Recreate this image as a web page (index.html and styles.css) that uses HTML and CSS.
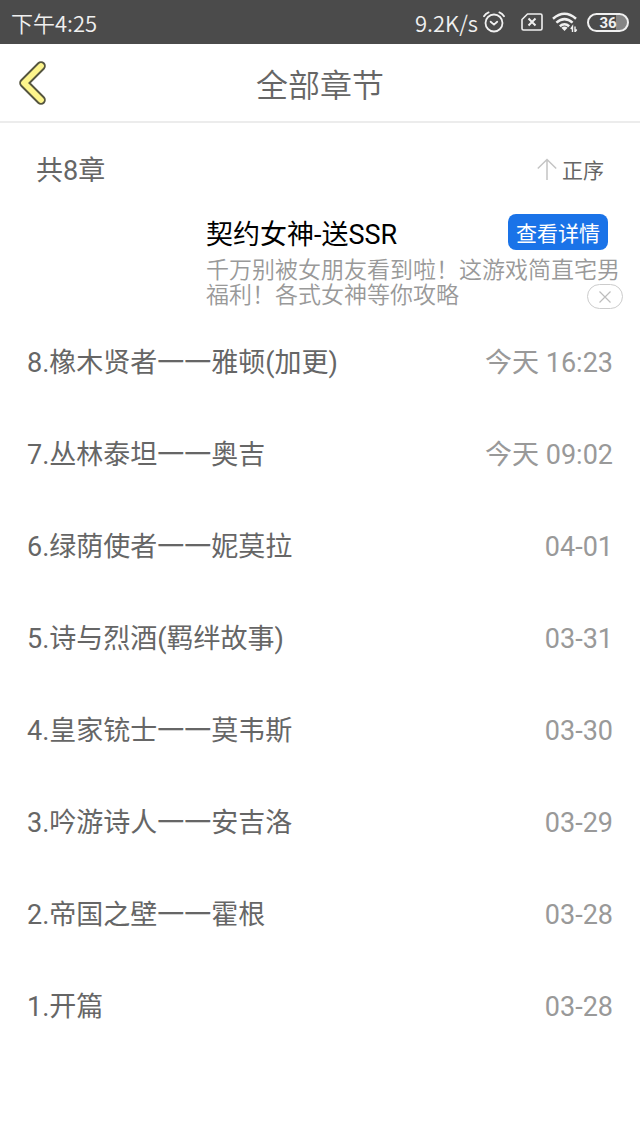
FILE: index.html
```html
<!DOCTYPE html>
<html lang="zh-CN">
<head>
    <meta charset="UTF-8">
    <meta name="viewport" content="width=device-width, initial-scale=1.0">
    <title>全部章节</title>
    <link rel="stylesheet" href="styles.css">
</head>
<body>

<div class="status-bar">
    <span>下午4:25</span>
    <div class="status-icons">
        <span>9.2K/s</span>
        <svg class="alarm" width="22" height="22" viewBox="0 0 22 22" fill="none" stroke="#f0f0f0" stroke-width="1.8" stroke-linecap="round">
            <circle cx="11" cy="12" r="8.5"/>
            <path d="M7.6 10.8L11 13.6L14.2 10.8M1 5.2Q2.5 2.6 5.6 1.4M21 5.2Q19.5 2.6 16.4 1.4"/>
        </svg>
        <svg class="sim" width="22" height="18" viewBox="0 0 22 18" fill="none" stroke="#f0f0f0" stroke-width="1.6" stroke-linejoin="round">
            <path d="M6.5 1H19.5Q21 1 21 2.5V15.5Q21 17 19.5 17H2.5Q1 17 1 15.5V6.5Z"/>
            <path d="M7.5 5.5L14.5 12.5M14.5 5.5L7.5 12.5" stroke-width="2"/>
        </svg>
        <svg class="wifi" width="26" height="20" viewBox="0 0 26 20" fill="none" stroke="#f0f0f0" stroke-width="2.5">
            <path d="M1 6.8Q12.5 -3.2 24 6.8M4.4 10.6Q12.5 3.6 20.6 10.6M7.8 14.2Q12.5 10.2 17.2 14.2"/>
            <path d="M12.5 19L9.4 15.8Q12.5 13.4 15.6 15.8Z" fill="#f0f0f0" stroke="none"/>
            <path d="M20.5 20V14.5L18.8 17M23 14.5V20L24.7 17.5" stroke-width="1.4"/>
        </svg>
        <span class="battery">36</span>
    </div>
</div>

<header class="header">
    <button class="back" type="button" aria-label="返回">
        <svg width="30" height="46" viewBox="0 0 30 46" fill="none" stroke-linecap="round" stroke-linejoin="round">
            <path d="M23 6L6 23L23 40" stroke="#55553f" stroke-width="9.6"/>
            <path d="M23 6L6 23L23 40" stroke="#fdf58c" stroke-width="5.8"/>
        </svg>
    </button>
    <h1>全部章节</h1>
</header>

<main>
    <div class="summary">
        <span class="total">共8章</span>
        <button class="sort" type="button">
            <svg width="20" height="22" viewBox="0 0 20 22" fill="none" stroke="#c4c4c4" stroke-width="1.5">
                <path d="M10 22V1.5M0.8 10.5L10 1.5L19.2 10.5"/>
            </svg>
            正序
        </button>
    </div>

    <section class="ad">
        <div class="ad-head">
            <h2>契约女神-送SSR</h2>
            <button class="ad-detail" type="button">查看详情</button>
        </div>
        <p>千万别被女朋友看到啦！这游戏简直宅男福利！各式女神等你攻略</p>
        <button class="ad-close" type="button" aria-label="关闭广告">
            <svg width="12" height="12" viewBox="0 0 12 12" stroke="#bdbdbd" stroke-width="1.2">
                <path d="M0.5 0.5L11.5 11.5M11.5 0.5L0.5 11.5"/>
            </svg>
        </button>
    </section>

    <ul class="chapters">
        <li><a href="#8">8.橡木贤者一一雅顿(加更)</a><time>今天 16:23</time></li>
        <li><a href="#7">7.丛林泰坦一一奥吉</a><time>今天 09:02</time></li>
        <li><a href="#6">6.绿荫使者一一妮莫拉</a><time>04-01</time></li>
        <li><a href="#5">5.诗与烈酒(羁绊故事)</a><time>03-31</time></li>
        <li><a href="#4">4.皇家铳士一一莫韦斯</a><time>03-30</time></li>
        <li><a href="#3">3.吟游诗人一一安吉洛</a><time>03-29</time></li>
        <li><a href="#2">2.帝国之壁一一霍根</a><time>03-28</time></li>
        <li><a href="#1">1.开篇</a><time>03-28</time></li>
    </ul>
</main>

</body>
</html>
```
FILE: styles.css
```css
* {
    box-sizing: border-box;
}

body {
    margin: 0;
    background-color: #fff;
    color: #666;
    font-family: Roboto, "Noto Sans CJK SC", sans-serif;
    font-size: 27px;
}

h1, h2, p, ul {
    margin: 0;
    padding: 0;
    font-weight: normal;
}

button {
    padding: 0;
    border: none;
    background: none;
    color: inherit;
    font-family: inherit;
    cursor: pointer;
}

svg {
    display: block;
}

.status-bar {
    display: flex;
    align-items: center;
    justify-content: space-between;
    height: 44px;
    padding: 0 11px;
    background-color: #4b4b4b;
    color: #f0f0f0;
    font-family: "Noto Sans CJK SC", sans-serif;
    font-size: 22px;
    font-weight: 350;
}

.status-icons {
    display: flex;
    align-items: center;
}

.alarm {
    margin-left: 5px;
}

.sim {
    margin-left: 16px;
}

.wifi {
    margin-left: 9px;
}

.battery {
    width: 42px;
    height: 19px;
    margin-left: 9px;
    border: 2px solid #f0f0f0;
    border-radius: 10px;
    background: linear-gradient(to right, #4b4b4b 70%, #858585 70%);
    font-family: Roboto, sans-serif;
    font-size: 15px;
    font-weight: bold;
    line-height: 16px;
    text-align: center;
}

.header {
    display: grid;
    grid-template-columns: 48px 1fr 48px;
    align-items: center;
    height: 79px;
    border-bottom: 2px solid #ececec;
}

.back {
    padding-left: 18px;
}

.header h1 {
    padding-top: 6px;
    font-size: 32px;
    font-weight: 350;
    line-height: 48px;
    text-align: center;
}

.summary {
    display: flex;
    align-items: center;
    justify-content: space-between;
    height: 91px;
    padding: 0 36px;
}

.sort {
    display: flex;
    align-items: center;
    gap: 5px;
    font-size: 21px;
}

.ad {
    position: relative;
    padding: 0 20px 0 206px;
}

.ad-head {
    display: flex;
    align-items: center;
    justify-content: space-between;
    height: 36px;
    padding-right: 12px;
}

.ad h2 {
    color: #000;
    font-size: 27px;
}

.ad-detail {
    width: 100px;
    height: 36px;
    border-radius: 8px;
    background-color: #1a73e8;
    color: #fff;
    font-size: 21px;
}

.ad p {
    margin-top: 8px;
    color: #999;
    font-size: 23px;
    font-weight: 350;
    line-height: 25px;
}

.ad-close {
    position: absolute;
    right: 17px;
    bottom: -1px;
    display: flex;
    align-items: center;
    justify-content: center;
    width: 36px;
    height: 25px;
    border: 1px solid #ccc;
    border-radius: 13px;
    background-color: #fff;
}

.chapters {
    padding: 9px 27px;
    list-style: none;
}

.chapters li {
    display: flex;
    align-items: baseline;
    justify-content: space-between;
    height: 92px;
    padding-top: 26px;
    line-height: 40px;
}

.chapters a {
    color: #666;
    text-decoration: none;
}

.chapters time {
    color: #999;
}
```
